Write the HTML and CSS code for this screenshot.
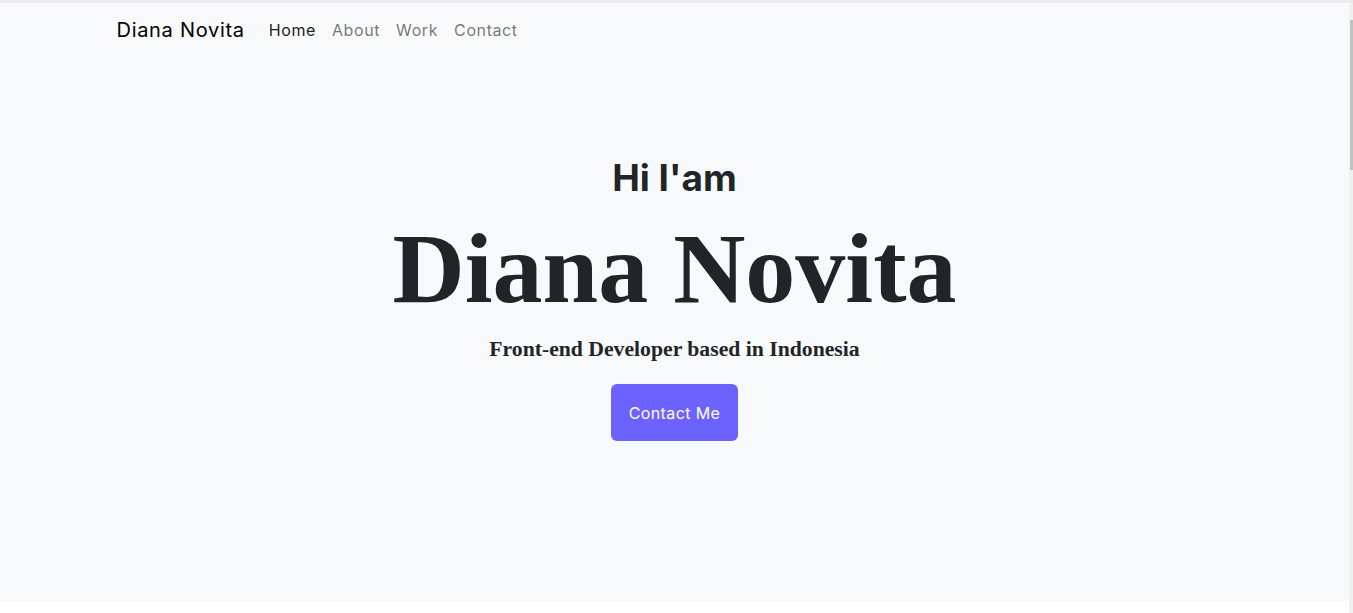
FILE: index.html
```html
<!DOCTYPE html>
<html lang="en">
<head>
<meta charset="utf-8">
<title>Diana Novita</title>
<link rel="stylesheet" href="styles.css">
</head>
<body>
<nav class="navbar">
  <div class="container nav-inner">
    <a class="brand" href="#">Diana Novita</a>
    <ul class="nav-links">
      <li><a class="nav-link active" href="#">Home</a></li>
      <li><a class="nav-link" href="#">About</a></li>
      <li><a class="nav-link" href="#">Work</a></li>
      <li><a class="nav-link" href="#">Contact</a></li>
    </ul>
  </div>
</nav>
<section class="hero">
  <h2 class="hello">Hi I'am</h2>
  <h1 class="name">Diana Novita</h1>
  <h5 class="tagline">Front-end Developer based in Indonesia</h5>
  <a class="btn-contact" href="#">Contact Me</a>
</section>
<div class="scrollbar"><div class="scroll-thumb"></div></div>
</body>
</html>
```
FILE: styles.css
```css
html {
  background: #ffffff;
}
body {
  margin: 0;
  padding-right: 4px;
  background: #ffffff;
  border-top: 3px solid #ececef;
  font-family: "Inter", "Liberation Sans", sans-serif;
  color: #212529;
}
.container {
  max-width: 1140px;
  margin: 0 auto;
  padding: 0 12px;
  box-sizing: border-box;
}
.navbar {
  padding: 7px 0 9px;
  background: #f8f9fa;
}
.nav-inner {
  display: flex;
  align-items: center;
}
.brand {
  font-size: 20px;
  line-height: 30px;
  padding: 5px 0;
  margin-right: 16px;
  color: #000;
  text-decoration: none;
  letter-spacing: 0.7px;
}
.nav-links {
  display: flex;
  list-style: none;
  margin: 0;
  padding: 0;
}
.nav-link {
  display: block;
  padding: 8px;
  font-size: 16px;
  line-height: 24px;
  color: rgba(0, 0, 0, 0.55);
  text-decoration: none;
  letter-spacing: 0.6px;
}
.nav-link.active {
  color: rgba(0, 0, 0, 0.9);
}
.hero {
  display: flex;
  flex-direction: column;
  align-items: center;
  padding-top: 95px;
  height: 542px;
  box-sizing: border-box;
  background: #f8f9fa;
}
.hello {
  margin: 0;
  font-size: 37px;
  line-height: 48px;
  font-weight: 700;
  color: #212529;
}
.name {
  margin: 9px 0 0;
  font-family: "Liberation Serif", serif;
  font-weight: 700;
  font-size: 100px;
  line-height: 116px;
  color: #212529;
}
.tagline {
  margin: 7px 0 0;
  font-family: "Liberation Serif", serif;
  font-weight: 700;
  font-size: 21.7px;
  line-height: 30px;
  color: #212529;
}
.btn-contact {
  margin-top: 20px;
  display: flex;
  align-items: center;
  justify-content: center;
  width: 127px;
  height: 57px;
  box-sizing: border-box;
  background: #6c63ff;
  color: #fff;
  border-radius: 6px;
  font-size: 16px;
  letter-spacing: 0.4px;
  text-decoration: none;
}
.scrollbar {
  position: fixed;
  top: 3px;
  right: 0;
  bottom: 0;
  width: 4px;
  background: #f1f1f1;
}
.scroll-thumb {
  margin: 17px 0 0 1px;
  height: 150px;
  background: #c1c1c1;
}
```
